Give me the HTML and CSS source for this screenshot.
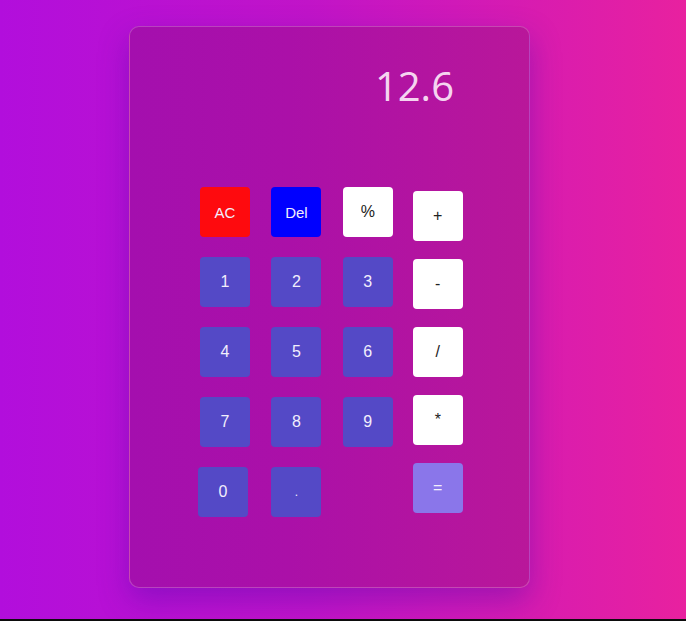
FILE: index.html
```html
<!DOCTYPE html>
<html>
<head>
<meta charset="utf-8">
<link rel="stylesheet" href="styles.css">
</head>
<body>
<div class="page">
  <div class="card">
    <div class="display">12.6</div>
    <div class="keys">
      <div class="grid">
        <button class="key red">AC</button>
        <button class="key blue">Del</button>
        <button class="key white">%</button>
        <button class="key num">1</button>
        <button class="key num">2</button>
        <button class="key num">3</button>
        <button class="key num">4</button>
        <button class="key num">5</button>
        <button class="key num">6</button>
        <button class="key num">7</button>
        <button class="key num">8</button>
        <button class="key num">9</button>
        <button class="key num zero">0</button>
        <button class="key num dot">.</button>
      </div>
      <div class="ops">
        <button class="key white">+</button>
        <button class="key white">-</button>
        <button class="key white">/</button>
        <button class="key white">*</button>
        <button class="key equal">=</button>
      </div>
    </div>
  </div>
</div>
</body>
</html>
```
FILE: styles.css
```css
html {
  background: #0c0c0c;
}
body {
  margin: 0;
  font-family: "Liberation Sans", Arial, sans-serif;
}
.page {
  height: 619px;
  overflow: hidden;
  background: linear-gradient(to right, #b20edc 0%, #c114c8 45%, #e8219f 100%);
  padding-top: 26px;
  box-sizing: border-box;
}
.card {
  width: 401px;
  height: 562px;
  box-sizing: border-box;
  margin-left: 129px;
  padding: 32px 0 0 70px;
  border: 1px solid rgba(255, 255, 255, 0.22);
  border-radius: 10px;
  background: linear-gradient(to right, #a40fae 0%, #ab10a8 40%, #b9179a 100%);
  box-shadow: 0 12px 30px rgba(70, 10, 170, 0.38);
}
.display {
  width: 254px;
  height: 54px;
  line-height: 54px;
  text-align: right;
  font-family: "Open Sans", sans-serif;
  font-size: 40px;
  color: rgba(255, 240, 252, 0.9);
  margin-bottom: 74px;
}
.keys {
  display: flex;
  gap: 20px;
}
.grid {
  display: grid;
  grid-template-columns: repeat(3, 50px);
  column-gap: 21.4px;
  row-gap: 20px;
}
.ops {
  display: flex;
  flex-direction: column;
  gap: 18px;
  padding-top: 4px;
}
.key {
  width: 50px;
  height: 50px;
  border: none;
  border-radius: 4px;
  padding: 0;
  font-family: "Liberation Sans", Arial, sans-serif;
  font-size: 16px;
  color: #f2eefc;
}
.red {
  background: #fe0a0e;
  font-size: 15px;
}
.blue {
  background: #0000ff;
  font-size: 15px;
}
.white {
  background: #ffffff;
  color: #222;
}
.num {
  background: #5449c6;
}
.equal {
  background: #8a76ea;
}
.zero {
  margin-left: -2px;
}
.dot {
  font-size: 12px;
}
```
